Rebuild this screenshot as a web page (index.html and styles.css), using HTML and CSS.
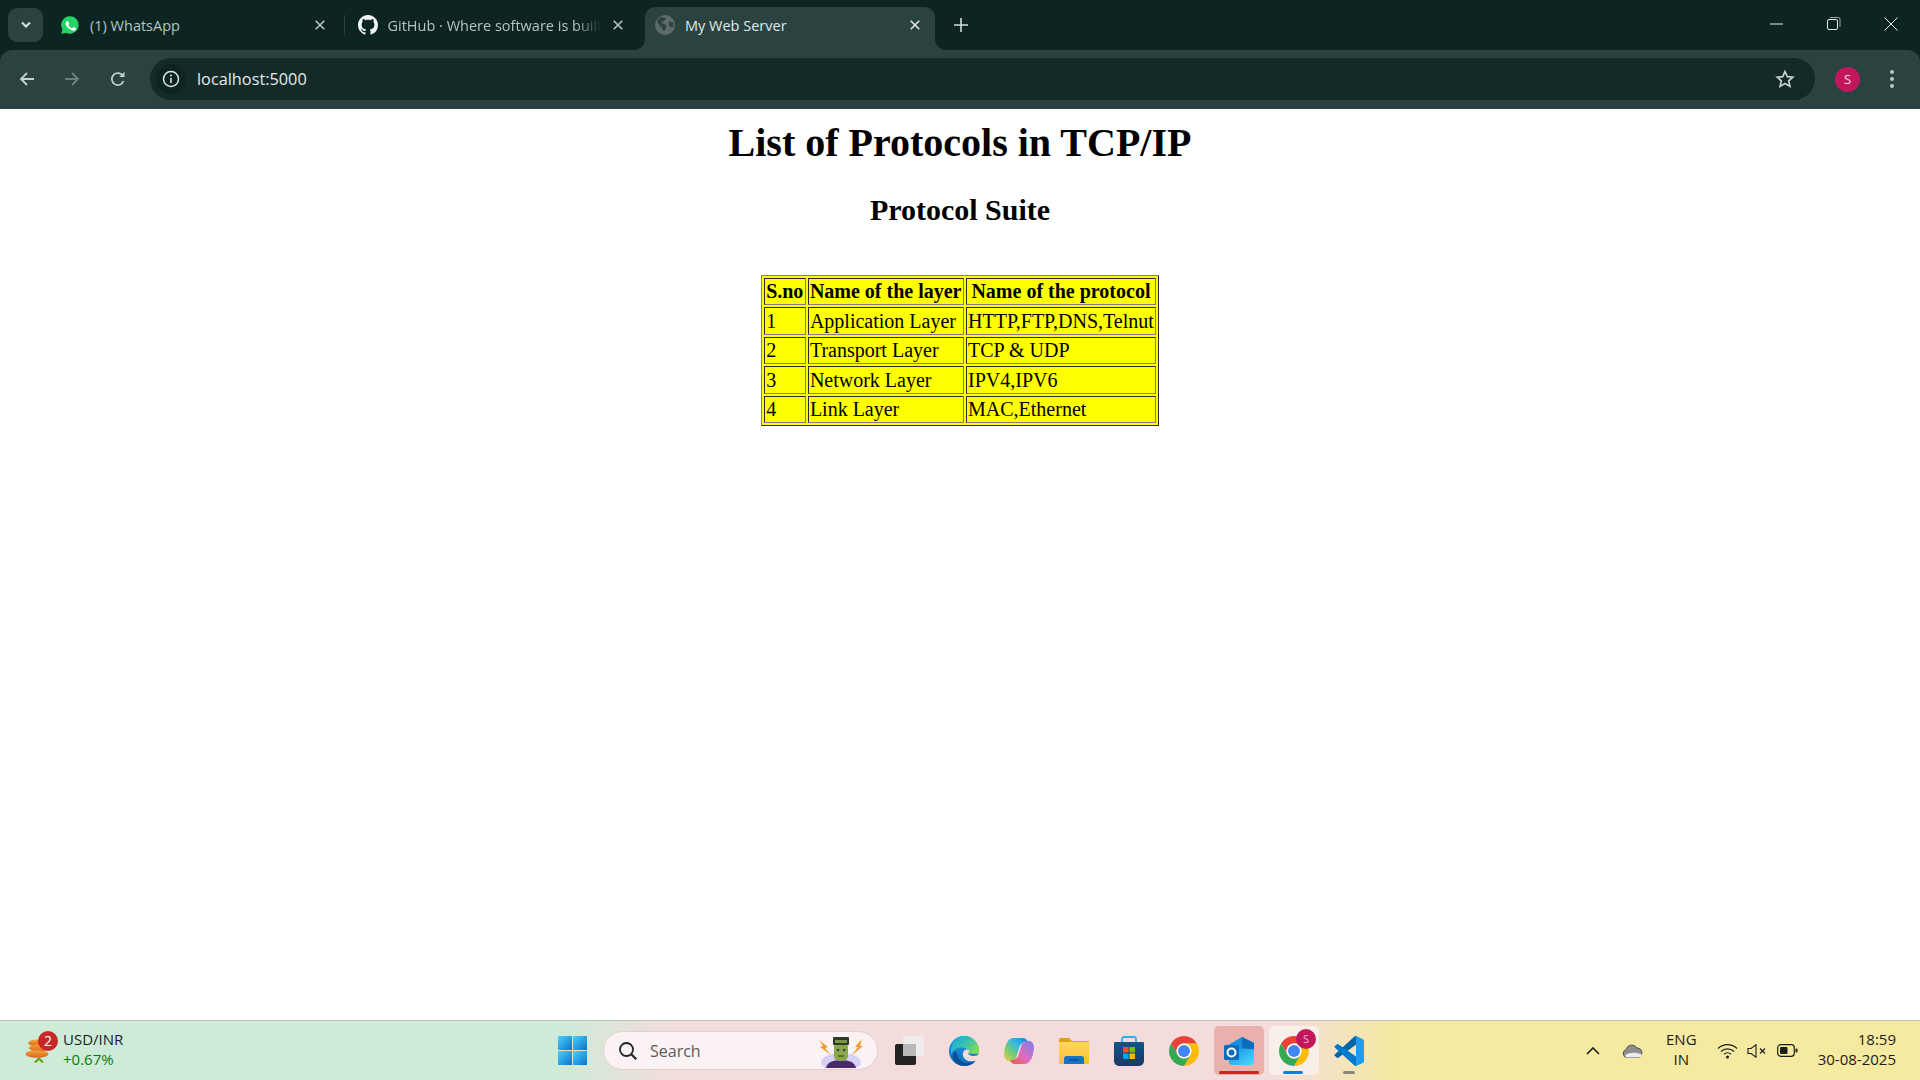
FILE: index.html
```html
<!DOCTYPE html>
<html lang="en">
<head>
    <meta charset="UTF-8">
    <meta name="viewport" content="width=device-width, initial-scale=1.0">
    <title>My Web Server</title>
    <link rel="stylesheet" href="styles.css">
</head>
<body>
    <svg class="defs" width="0" height="0">
        <defs>
            <symbol id="chrome" viewBox="4 4 40 40">
                <path fill="#ea4335" d="M6.68 14A20 20 0 0 1 41.32 14H24A10 10 0 0 0 15.34 29Z"/>
                <path fill="#fbbc04" d="M41.32 14A20 20 0 0 1 24 44L32.66 29A10 10 0 0 0 24 14Z"/>
                <path fill="#34a853" d="M24 44A20 20 0 0 1 6.68 14L15.34 29A10 10 0 0 0 32.66 29Z"/>
                <circle cx="24" cy="24" r="10" fill="#fff"/>
                <circle cx="24" cy="24" r="8" fill="#4285f4"/>
            </symbol>
            <symbol id="close" viewBox="0 0 10 10">
                <path d="M.7.7l8.600 8.600M9.300.7L.7 9.300" stroke="currentColor" stroke-width="1.500"/>
            </symbol>
            <linearGradient id="winGrad" x1="0" y1="0" x2="1" y2="1">
                <stop offset="0" stop-color="#4fd0fb"/>
                <stop offset="1" stop-color="#0474d0"/>
            </linearGradient>
            <linearGradient id="edgeGreen" x1="0" y1="0" x2="1" y2=".6">
                <stop offset="0" stop-color="#25a6e6"/>
                <stop offset=".55" stop-color="#35c1b1"/>
                <stop offset="1" stop-color="#7ed957"/>
            </linearGradient>
            <linearGradient id="edgeBlue" x1="0" y1="0" x2="0" y2="1">
                <stop offset="0" stop-color="#1b9de2"/>
                <stop offset="1" stop-color="#0f6cbd"/>
            </linearGradient>
            <linearGradient id="copA" x1="1" y1="0" x2="0" y2="1">
                <stop offset="0" stop-color="#1f7fe0"/>
                <stop offset=".35" stop-color="#2fb6e8"/>
                <stop offset=".7" stop-color="#7fce6a"/>
                <stop offset="1" stop-color="#f6d044"/>
            </linearGradient>
            <linearGradient id="copB" x1="1" y1="0" x2="0" y2="1">
                <stop offset="0" stop-color="#ee5a3c"/>
                <stop offset=".45" stop-color="#e06cc0"/>
                <stop offset="1" stop-color="#7a7ef0"/>
            </linearGradient>
            <linearGradient id="folder" x1="0" y1="0" x2="0" y2="1">
                <stop offset="0" stop-color="#ffd75e"/>
                <stop offset="1" stop-color="#fbc02d"/>
            </linearGradient>
            <linearGradient id="store" x1="0" y1="0" x2="0" y2="1">
                <stop offset="0" stop-color="#0f548c"/>
                <stop offset="1" stop-color="#1c3a66"/>
            </linearGradient>
            <linearGradient id="outlookBox" x1="0" y1="0" x2="1" y2="1">
                <stop offset="0" stop-color="#1490df"/>
                <stop offset="1" stop-color="#50d9ff"/>
            </linearGradient>
            <linearGradient id="coin" x1="0" y1="0" x2="0" y2="1">
                <stop offset="0" stop-color="#f7a23a"/>
                <stop offset="1" stop-color="#d9641a"/>
            </linearGradient>
        </defs>
    </svg>

    <header class="browser">
        <div class="tabstrip">
            <button class="tab-search">
                <svg width="12" height="8" viewBox="0 0 12 8"><path d="M2 1.500l4 4 4-4" fill="none" stroke="#d7e3e0" stroke-width="2"/></svg>
            </button>
            <div class="tab">
                <svg class="favicon" viewBox="0 0 24 24">
                    <path fill="#25d366" d="M12 1.500A10.400 10.400 0 0 0 3 17.200L1.500 22.700l5.700-1.500A10.400 10.400 0 1 0 12 1.500z"/>
                    <path fill="#fff" d="M8.400 6.600c-.3 0-.7.1-1 .5-.4.4-1.300 1.200-1.300 3s1.300 3.500 1.500 3.800c.2.2 2.600 4 6.300 5.500 3 1.200 3.700 1 4.300.9.700-.1 2.100-.9 2.400-1.700.3-.8.3-1.500.2-1.700-.1-.1-.3-.2-.7-.4l-2.500-1.200c-.3-.1-.6-.2-.8.2l-1.100 1.400c-.2.200-.4.300-.8.100-.4-.2-1.500-.6-2.900-1.800-1.100-1-1.800-2.200-2-2.500-.2-.4 0-.6.2-.8l.5-.6c.2-.2.2-.4.4-.6.100-.2 0-.5 0-.7L9.600 7.200c-.3-.6-.5-.6-.8-.6z" transform="translate(1.700 1.700) scale(.84)"/>
                </svg>
                <span class="tab-title">(1) WhatsApp</span>
                <svg class="tab-close"><use href="#close"/></svg>
            </div>
            <div class="tab tab-sep">
                <svg class="favicon" viewBox="0 0 16 16"><path fill="#f2f5f4" d="M8 0C3.580 0 0 3.580 0 8c0 3.540 2.290 6.530 5.470 7.590.4.07.55-.17.55-.38 0-.19-.01-.82-.01-1.490-2.010.37-2.530-.49-2.690-.94-.09-.23-.48-.94-.82-1.130-.28-.15-.68-.52-.01-.53.63-.01 1.080.58 1.230.82.72 1.210 1.870.87 2.330.66.07-.52.28-.87.51-1.070-1.780-.2-3.640-.89-3.640-3.950 0-.87.31-1.590.82-2.150-.08-.2-.36-1.020.08-2.120 0 0 .67-.21 2.200.82.64-.18 1.320-.27 2-.27.68 0 1.360.09 2 .27 1.530-1.040 2.200-.82 2.200-.82.44 1.100.16 1.920.08 2.120.51.56.82 1.270.82 2.150 0 3.070-1.870 3.750-3.650 3.950.29.25.54.73.54 1.480 0 1.070-.01 1.930-.01 2.200 0 .21.15.46.55.38A8.013 8.013 0 0016 8c0-4.420-3.580-8-8-8z"/></svg>
                <span class="tab-title tab-fade">GitHub · Where software is built</span>
                <svg class="tab-close"><use href="#close"/></svg>
            </div>
            <div class="tab tab-active">
                <svg class="favicon" viewBox="0 0 18 18">
                    <circle cx="9" cy="9" r="9" fill="#5f6a6c"/>
                    <path fill="#2b4340" d="M5 1.800c1.500.6 3 .3 4.500 1 .6 1-.4 2-1.400 2.400-.6 1-2 .9-2.400 2 .8 1 2.400.5 3.500 1.300 1 .9 1.200 2.200.7 3.400-.4.900-1.300 1.500-1.500 2.600-1.500-.3-1.800-1.800-2-3-.5-1-1.800-1.300-2.300-2.300C3.500 7.800 2.600 6.600 1.800 6 2.400 4.300 3.500 2.800 5 1.800zM13 5.500c.8.900 2 .9 3 .8.600 1.500.6 3.300.1 4.800-1 .3-2.300-.3-3-1.200-.7-1.200-.8-3.100-.1-4.400z"/>
                </svg>
                <span class="tab-title">My Web Server</span>
                <svg class="tab-close"><use href="#close"/></svg>
            </div>
            <button class="tab-new">
                <svg width="14" height="14" viewBox="0 0 14 14"><path d="M7 0v14M0 7h14" stroke="#cfdcd9" stroke-width="1.600"/></svg>
            </button>
            <div class="window-controls">
                <svg width="14" height="14" viewBox="0 0 14 14"><path d="M0 7h13" stroke="#e6ecea" stroke-width="1"/></svg>
                <svg width="14" height="14" viewBox="0 0 14 14"><rect x=".5" y="2.500" width="10" height="10" rx="1.500" fill="none" stroke="#e6ecea"/><path d="M3 .5h8.500a1.500 1.500 0 0 1 1.500 1.500V10" fill="none" stroke="#9aa8a6"/></svg>
                <svg width="14" height="14" viewBox="0 0 14 14"><path d="M.5.5l13 13M13.500.5l-13 13" stroke="#e6ecea" stroke-width="1"/></svg>
            </div>
        </div>
        <div class="toolbar">
            <div class="nav-buttons">
                <svg width="18" height="18" viewBox="0 0 18 18"><path d="M16 9H3M9 3L3 9l6 6" fill="none" stroke="#c5d3d0" stroke-width="1.800"/></svg>
                <svg width="18" height="18" viewBox="0 0 18 18"><path d="M2 9h13M9 3l6 6-6 6" fill="none" stroke="#6d807d" stroke-width="1.800"/></svg>
                <svg class="reload" width="18" height="18" viewBox="0 0 18 18"><path d="M14.500 11a6 6 0 1 1-.6-5.200" fill="none" stroke="#c5d3d0" stroke-width="1.700"/><path d="M15.500 1.800v5.200h-5.200z" fill="#c5d3d0"/></svg>
            </div>
            <div class="omnibox">
                <span class="site-info">
                    <svg width="18" height="18" viewBox="0 0 18 18"><circle cx="9" cy="9" r="7.500" fill="none" stroke="#dde6e4" stroke-width="1.500"/><path d="M9 8v5" stroke="#dde6e4" stroke-width="1.600"/><circle cx="9" cy="5.500" r="1" fill="#dde6e4"/></svg>
                </span>
                <span class="url">localhost:5000</span>
                <svg class="star" width="20" height="20" viewBox="0 0 20 20"><path d="M10 2.500l2.300 5.100 5.500.6-4.100 3.700 1.200 5.500L10 14.600l-4.900 2.800 1.200-5.500-4.100-3.700 5.500-.6z" fill="none" stroke="#c5d3d0" stroke-width="1.700"/></svg>
            </div>
            <span class="avatar">S</span>
            <span class="menu-dots"><i></i><i></i><i></i></span>
        </div>
    </header>

    <main class="page">
        <h1>List of Protocols in TCP/IP</h1>
        <h2>Protocol Suite</h2>
        <table class="protocols" border="1">
            <tr><th>S.no</th><th>Name of the layer</th><th>Name of the protocol</th></tr>
            <tr><td>1</td><td>Application Layer</td><td>HTTP,FTP,DNS,Telnut</td></tr>
            <tr><td>2</td><td>Transport Layer</td><td>TCP &amp; UDP</td></tr>
            <tr><td>3</td><td>Network Layer</td><td>IPV4,IPV6</td></tr>
            <tr><td>4</td><td>Link Layer</td><td>MAC,Ethernet</td></tr>
        </table>
    </main>

    <footer class="taskbar">
        <div class="widget">
            <span class="widget-icon">
                <svg width="24" height="34" viewBox="0 0 24 34">
                    <ellipse cx="13" cy="7" rx="10" ry="3.500" fill="url(#coin)"/>
                    <ellipse cx="14" cy="12" rx="10" ry="3.500" fill="url(#coin)"/>
                    <ellipse cx="12" cy="18" rx="11.500" ry="3.800" fill="url(#coin)"/>
                    <path d="M9 26l5-5 5 5-2 1-3-3-3 3z" fill="#5fa315"/>
                </svg>
                <b class="widget-badge">2</b>
            </span>
            <span class="widget-text">
                <span>USD/INR</span>
                <span class="gain">+0.67%</span>
            </span>
        </div>
        <div class="apps">
            <svg class="start" width="29" height="29" viewBox="0 0 29 29">
                <rect width="14" height="14" fill="url(#winGrad)"/><rect x="15" width="14" height="14" fill="url(#winGrad)"/>
                <rect y="15" width="14" height="14" fill="url(#winGrad)"/><rect x="15" y="15" width="14" height="14" fill="url(#winGrad)"/>
            </svg>
            <div class="search">
                <svg width="20" height="20" viewBox="0 0 20 20"><circle cx="8.500" cy="8.500" r="6.500" fill="none" stroke="#222" stroke-width="1.800"/><path d="M13.300 13.300l5 5" stroke="#222" stroke-width="2.200"/></svg>
                <span class="search-text">Search</span>
                <svg class="search-art" width="50" height="32" viewBox="0 0 50 32">
                    <ellipse cx="25" cy="26" rx="20" ry="9" fill="#d6d0fa"/>
                    <path d="M3 4l9 7-3 1 6 7-11-8 3-1zM46 3l-7 8 3 0-7 9 12-10-3 0z" fill="#f59b2b"/>
                    <path d="M10 32c1-6 8-8 15-8s14 2 15 8z" fill="#4a2a6b"/>
                    <rect x="18" y="6" width="14" height="19" rx="5" fill="#8aa84a"/>
                    <rect x="17" y="1" width="16" height="8" rx="1" fill="#2f3a2a"/>
                    <rect x="19" y="4" width="12" height="3" fill="#7c9a44"/>
                    <circle cx="22" cy="14" r="1.300" fill="#345"/><circle cx="28" cy="14" r="1.300" fill="#345"/>
                    <path d="M22 20h6" stroke="#3d4f1e" stroke-width="1.200"/>
                </svg>
            </div>
            <div class="app">
                <svg width="29" height="29" viewBox="0 0 29 29"><rect x="0" y="8" width="21" height="21" rx="2" fill="#222"/><rect x="8" y="0" width="21" height="20" rx="2" fill="#eee" fill-opacity=".85"/><rect x="8" y="8" width="13" height="12" fill="#b9b9b9"/></svg>
            </div>
            <div class="app">
                <svg width="30" height="30" viewBox="0 0 30 30">
                    <circle cx="15" cy="15" r="15" fill="url(#edgeBlue)"/>
                    <path fill="#0c4f96" d="M8 17C8 22 12 26.500 18 27c3 .2 6.500-.7 9-2.500C25 28 20.500 30 15 30 10 30 6 27 4 23c-1-3 0-6 1-8z"/>
                    <path fill="url(#edgeGreen)" d="M15 0c8 0 15 6 15 14v4l-11-.5c1-1.500 1-3.500-1-4.500C13 10 6 11 2 18 1 8 8 0 15 0z"/>
                    <path fill="#f5dcdc" d="M30 18v12H20c3-1 5.500-3 7-5.500-4 1.500-8 1-10.500-1C13.500 21 13 17 15 15c1-1.500 3-2 4.500-1 1 1 .5 2.500-.5 3.500 1 1.500 2.500 2.500 5 2.500 3 0 5.500-1 6-2z"/>
                </svg>
            </div>
            <div class="app">
                <svg width="30" height="30" viewBox="0 0 30 30">
                    <path fill="url(#copA)" d="M9 2h10c2.500 0 4 1.500 5 4h-2c-3.500 0-5.500 2-6.500 5l-3 9.500C11.500 24 9.500 25 6.500 25H5C2 25 0 22 0 18 .5 11 3.500 2 9 2z"/>
                    <path fill="url(#copB)" d="M9 2h10c2.500 0 4 1.500 5 4h-2c-3.500 0-5.500 2-6.500 5l-3 9.500C11.500 24 9.500 25 6.500 25H5C2 25 0 22 0 18 .5 11 3.500 2 9 2z" transform="rotate(180 15 15)"/>
                </svg>
            </div>
            <div class="app">
                <svg width="30" height="26" viewBox="0 0 30 26">
                    <path fill="#e0a112" d="M0 2a2 2 0 0 1 2-2h8l3 3h17v4H0z"/>
                    <rect y="4" width="30" height="22" fill="url(#folder)"/>
                    <path fill="#1a73c4" d="M5 26v-5a3 3 0 0 1 3-3h14a3 3 0 0 1 3 3v5z"/>
                    <path d="M10 22h10" stroke="#0d4f8f" stroke-width="1.500"/>
                </svg>
            </div>
            <div class="app">
                <svg width="30" height="30" viewBox="0 0 30 30">
                    <path d="M8 6V3a2 2 0 0 1 2-2h10a2 2 0 0 1 2 2v3" fill="none" stroke="#25b4e8" stroke-width="1.800"/>
                    <path fill="url(#store)" d="M0 7a1 1 0 0 1 1-1h28a1 1 0 0 1 1 1v18a5 5 0 0 1-5 5H5a5 5 0 0 1-5-5z"/>
                    <rect x="9" y="11" width="5.500" height="5.500" fill="#f25022"/><rect x="15.500" y="11" width="5.500" height="5.500" fill="#7fba00"/>
                    <rect x="9" y="17.500" width="5.500" height="5.500" fill="#00a4ef"/><rect x="15.500" y="17.500" width="5.500" height="5.500" fill="#ffb900"/>
                </svg>
            </div>
            <div class="app">
                <svg width="30" height="30"><use href="#chrome"/></svg>
            </div>
            <div class="app app-open">
                <svg width="30" height="28" viewBox="0 0 30 28">
                    <path fill="#1490df" d="M4 8l14-8 12 6v6H4z"/>
                    <path fill="#0f6cbd" d="M18 0l12 6v8l-12-4z"/>
                    <path fill="url(#outlookBox)" d="M5 12h25v13a3 3 0 0 1-3 3H8a3 3 0 0 1-3-3z"/>
                    <rect y="8" width="15" height="15" rx="1.500" fill="#0f6cbd"/>
                    <circle cx="7.500" cy="15.500" r="4" fill="none" stroke="#fff" stroke-width="2"/>
                </svg>
            </div>
            <div class="app app-active">
                <svg width="30" height="30"><use href="#chrome"/></svg>
                <b class="app-badge">S</b>
            </div>
            <div class="app app-running">
                <svg width="30" height="30" viewBox="0 0 30 30">
                    <path fill="#0065a9" d="M28.500 3.300L22.300.3a1.900 1.900 0 0 0-2.100.4L1 18.200a1.200 1.200 0 0 0 0 1.900l1.700 1.500a1.300 1.300 0 0 0 1.600.1L28.900 3.400z"/>
                    <path fill="#007acc" d="M28.500 26.700L22.300 29.700a1.900 1.900 0 0 1-2.100-.4L1 11.800a1.200 1.200 0 0 1 0-1.900l1.700-1.500a1.300 1.300 0 0 1 1.600-.1L30 26z"/>
                    <path fill="#1f9cf0" d="M22.300 29.700a1.900 1.900 0 0 1-2.100-.4c.7.700 1.800.2 1.800-.7V1.400c0-1-1.100-1.400-1.800-.7a1.900 1.900 0 0 1 2.100-.4l6.200 3A1.900 1.900 0 0 1 30 5v20a1.900 1.900 0 0 1-1.500 1.700z"/>
                </svg>
            </div>
        </div>
        <div class="tray">
            <svg width="14" height="8" viewBox="0 0 14 8"><path d="M1 7l6-6 6 6" fill="none" stroke="#1d1d1d" stroke-width="1.600"/></svg>
            <svg class="cloud" width="21" height="14" viewBox="0 0 21 14"><path d="M5 13.500a4 4 0 0 1-1-7.800A6 6 0 0 1 15 4a4.800 4.800 0 0 1 1 9.500z" fill="#8f8f8f" stroke="#333" stroke-width=".8"/><path d="M3 11.500c3-3 10-4 17-1-.5 2-2 3-4 3H5c-1 0-1.500-1-2-2z" fill="#eee"/></svg>
            <span class="lang"><span>ENG</span><span>IN</span></span>
            <svg class="wifi" width="21" height="16" viewBox="0 0 21 16"><path d="M1 5.500a13.500 13.500 0 0 1 19 0M4 8.500a9.500 9.500 0 0 1 13 0M7 11.200a5 5 0 0 1 7 0" fill="none" stroke="#1d1d1d" stroke-width="1.200"/><circle cx="10.500" cy="14" r="1.500" fill="#1d1d1d"/></svg>
            <svg class="sound" width="20" height="14" viewBox="0 0 20 14"><path d="M1 4.500h3L9 .8v12.400L4 9.500H1z" fill="none" stroke="#1d1d1d" stroke-width="1.100"/><path d="M13 4.500l5 5M18 4.500l-5 5" stroke="#1d1d1d" stroke-width="1.100"/></svg>
            <svg class="battery" width="21" height="13" viewBox="0 0 21 13"><rect x=".7" y=".7" width="16.600" height="11.600" rx="3" fill="none" stroke="#1d1d1d" stroke-width="1.200"/><rect x="3" y="3" width="7.500" height="7" rx="1" fill="#1d1d1d"/><rect x="18.500" y="4.500" width="2" height="4" rx="1" fill="#1d1d1d"/></svg>
            <span class="clock"><span>18:59</span><span>30-08-2025</span></span>
        </div>
    </footer>
</body>
</html>
```

FILE: styles.css
```css
* {
    box-sizing: border-box;
}
html, body {
    height: 100%;
}
body {
    margin: 0;
    display: flex;
    flex-direction: column;
    height: 1080px;
    overflow: hidden;
    background: #fff;
    font-family: "Open Sans", "Noto Sans", sans-serif;
}
.defs {
    position: absolute;
}
button {
    border: none;
    background: none;
    padding: 0;
}

/* browser frame */
.browser {
    background: #0c2523;
    color: #dfe8e6;
    flex: none;
}
.tabstrip {
    height: 50px;
    display: flex;
    align-items: flex-end;
    padding-left: 8px;
}
.tab-search {
    width: 35px;
    height: 34px;
    margin: 0 7px 8px 0;
    border-radius: 9px;
    background: #2b4340;
    display: flex;
    align-items: center;
    justify-content: center;
}
.tab {
    position: relative;
    width: 290px;
    height: 43px;
    margin-right: 7.5px;
    padding: 0 15px 7px 10px;
    display: flex;
    align-items: center;
    font-size: 14.5px;
    color: #b4c4c1;
}
.tab-sep::before {
    content: "";
    position: absolute;
    left: -4px;
    top: 8px;
    height: 20px;
    border-left: 1px solid #2b4340;
}
.favicon {
    width: 20px;
    height: 20px;
    flex: none;
    margin-right: 10px;
}
.tab-title {
    flex: 1;
    white-space: nowrap;
    overflow: hidden;
}
.tab-fade {
    margin-right: 12px;
    -webkit-mask-image: linear-gradient(to right, #000 88%, transparent);
    mask-image: linear-gradient(to right, #000 88%, transparent);
}
.tab-close {
    width: 10px;
    height: 10px;
    flex: none;
    color: #b9cac7;
}
.tab-active {
    background: #2b4340;
    border-radius: 10px 10px 0 0;
    color: #dfe8e6;
}
.tab-active .tab-close {
    color: #e6ecea;
}
.tab-active::before,
.tab-active::after {
    content: "";
    position: absolute;
    bottom: 0;
    width: 12px;
    height: 12px;
}
.tab-active::before {
    left: -12px;
    background: radial-gradient(circle at 0 0, transparent 12px, #2b4340 12.5px);
}
.tab-active::after {
    right: -12px;
    background: radial-gradient(circle at 100% 0, transparent 12px, #2b4340 12.5px);
}
.tab-new {
    margin: 0 0 18px 11px;
    height: 14px;
}
.window-controls {
    margin-left: auto;
    padding: 17px 22px 0 0;
    height: 100%;
    display: flex;
    align-items: flex-start;
    gap: 43px;
}

.toolbar {
    height: 59px;
    background: #2b4340;
    border-radius: 12px 12px 0 0;
    border-bottom: 1px solid #324844;
    display: flex;
    align-items: center;
    padding-left: 18px;
}
.nav-buttons {
    display: flex;
    gap: 27px;
    width: 132px;
}
.reload {
    margin-left: 1px;
}
.omnibox {
    width: 1665px;
    height: 42px;
    border-radius: 21px;
    background: #132a28;
    display: flex;
    align-items: center;
    padding: 0 20px 0 6px;
}
.site-info {
    width: 30px;
    height: 30px;
    border-radius: 50%;
    background: #0c2523;
    display: flex;
    align-items: center;
    justify-content: center;
    margin-right: 11px;
}
.url {
    flex: 1;
    font-size: 16.3px;
    color: #e4ecea;
}
.avatar {
    width: 25px;
    height: 25px;
    margin-left: 20px;
    border-radius: 50%;
    background: #c2185b;
    color: #f7dbe6;
    font-size: 13px;
    line-height: 25px;
    text-align: center;
}
.menu-dots {
    margin-left: 30px;
    display: flex;
    flex-direction: column;
    gap: 3px;
}
.menu-dots i {
    width: 4px;
    height: 4px;
    border-radius: 50%;
    background: #b7c8c5;
}

/* the served page */
.page {
    flex: 1;
    zoom: 1.25;
    padding: 8px 8px 0;
    text-align: center;
    font-family: "Liberation Serif", "Times New Roman", serif;
    color: #000;
}
.page h1 {
    margin: 0 0 0.67em;
}
.page h2 {
    margin: 0.83em 0;
}
.protocols {
    margin: 38.4px auto 0;
    background: yellow;
}
.protocols th {
    text-align: center;
}
.protocols td {
    text-align: left;
}

/* windows taskbar */
.taskbar {
    flex: none;
    height: 60px;
    border-top: 1px solid #b9c4bb;
    background: linear-gradient(to right, #cdebd6 0, #cdebd6 560px, #f5dcdc 680px, #f5dcdc 1280px, #f5ea9f 1400px);
    display: flex;
    align-items: center;
    color: #1d1d1d;
}
.widget {
    width: 558px;
    padding-left: 25px;
    display: flex;
    gap: 14px;
    align-items: center;
}
.widget-icon {
    position: relative;
    width: 24px;
    height: 34px;
    margin-top: 5px;
}
.widget-badge {
    position: absolute;
    left: 13px;
    top: -5px;
    width: 20px;
    height: 20px;
    border-radius: 50%;
    background: #c62828;
    color: #fff;
    font-size: 14px;
    font-weight: 400;
    line-height: 20px;
    text-align: center;
}
.widget-text {
    display: flex;
    flex-direction: column;
    padding-bottom: 4px;
    font-size: 15px;
    line-height: 20px;
}
.gain {
    color: #0f7b0f;
}
.apps {
    display: flex;
    align-items: center;
    width: 822px;
}
.start {
    margin-right: 16px;
}
.search {
    width: 275px;
    height: 39px;
    margin-right: 6px;
    border-radius: 20px;
    background: #fbf3f3;
    border: 1px solid #e2cfcf;
    display: flex;
    align-items: center;
    padding: 0 11px 0 14px;
}
.search-text {
    flex: 1;
    margin-left: 12px;
    font-size: 16px;
    color: #5a5a5a;
}
.search-art {
    margin-top: 2px;
}
.app {
    position: relative;
    width: 50px;
    height: 49px;
    margin-right: 5px;
    border-radius: 5px;
    display: flex;
    align-items: center;
    justify-content: center;
}
.app-open {
    background: #e9b0ac;
}
.app-open::after,
.app-active::after,
.app-running::after {
    content: "";
    position: absolute;
    bottom: 1px;
    height: 3px;
    border-radius: 2px;
}
.app-open::after {
    left: 5px;
    right: 5px;
    background: #c42b1c;
}
.app-active {
    background: #f9efe9;
}
.app-active::after {
    left: 14px;
    right: 16px;
    background: #0a7fd6;
}
.app-running::after {
    left: 19px;
    right: 19px;
    background: #8a8a78;
}
.app-badge {
    position: absolute;
    right: 3px;
    top: 3px;
    width: 20px;
    height: 20px;
    border-radius: 50%;
    background: #c2185b;
    color: #f3b7cf;
    font-size: 11px;
    font-weight: 400;
    line-height: 20px;
    text-align: center;
}
.tray {
    flex: 1;
    display: flex;
    align-items: center;
    padding-left: 206px;
    padding-right: 24px;
    font-size: 15px;
}
.cloud {
    margin-left: 22px;
}
.lang {
    display: flex;
    flex-direction: column;
    align-items: center;
    padding-bottom: 4px;
    line-height: 20px;
    margin-left: 23px;
}
.wifi {
    margin-left: 20px;
}
.sound {
    margin-left: 9px;
}
.battery {
    margin-left: 10px;
}
.clock {
    margin-left: auto;
    display: flex;
    flex-direction: column;
    align-items: flex-end;
    padding-bottom: 4px;
    line-height: 20px;
}
```
